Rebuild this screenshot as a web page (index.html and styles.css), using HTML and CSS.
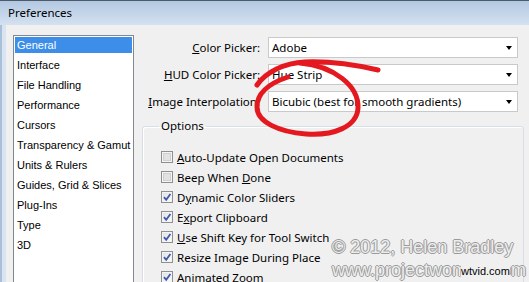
FILE: index.html
```html
<!DOCTYPE html>
<html lang="en">
<head>
  <meta charset="UTF-8">
  <meta name="viewport" content="width=device-width, initial-scale=1.0">
  <title>Preferences</title>

  <link rel="stylesheet" href="styles.css">
</head>

<body>
  <div class="window">
    <div class="titlebar">Preferences</div>

    <div class="content">
      <ul class="nav">
        <li class="active">General</li>
        <li>Interface</li>
        <li>File Handling</li>
        <li>Performance</li>
        <li>Cursors</li>
        <li>Transparency &amp; Gamut</li>
        <li>Units &amp; Rulers</li>
        <li>Guides, Grid &amp; Slices</li>
        <li>Plug-Ins</li>
        <li>Type</li>
        <li>3D</li>
      </ul>

      <div class="panel">
        <div class="field">
          <span class="label"><u>C</u>olor Picker:</span>
          <div class="select">Adobe</div>
        </div>
        <div class="field">
          <span class="label"><u>H</u>UD Color Picker:</span>
          <div class="select">Hue Strip</div>
        </div>
        <div class="field">
          <span class="label"><u>I</u>mage Interpolation:</span>
          <div class="select">Bicubic (best for smooth gradients)</div>
        </div>

        <fieldset class="options">
          <legend>Options</legend>
          <div class="checks">
            <div class="check"><span class="box"></span><span><u>A</u>uto-Update Open Documents</span></div>
            <div class="check"><span class="box"></span><span>Beep When <u>D</u>one</span></div>
            <div class="check"><span class="box on"><svg viewBox="0 0 10 10"><path d="M2 5.2 L4.2 7.8 L8.4 2"/></svg></span><span>D<u>y</u>namic Color Sliders</span></div>
            <div class="check"><span class="box on"><svg viewBox="0 0 10 10"><path d="M2 5.2 L4.2 7.8 L8.4 2"/></svg></span><span>E<u>x</u>port Clipboard</span></div>
            <div class="check"><span class="box on"><svg viewBox="0 0 10 10"><path d="M2 5.2 L4.2 7.8 L8.4 2"/></svg></span><span><u>U</u>se Shift Key for Tool Switch</span></div>
            <div class="check"><span class="box on"><svg viewBox="0 0 10 10"><path d="M2 5.2 L4.2 7.8 L8.4 2"/></svg></span><span>Resize Image During Place</span></div>
            <div class="check"><span class="box on"><svg viewBox="0 0 10 10"><path d="M2 5.2 L4.2 7.8 L8.4 2"/></svg></span><span>Animated Zoom</span></div>
          </div>
        </fieldset>
      </div>
    </div>
  </div>

  <!-- red pen mark drawn over the screenshot -->
  <svg class="markup" viewBox="0 0 529 282" width="529" height="282">
    <path d="M257 85 C266 72 284 63 305 62 C330 61 356 65 378 70"/>
    <path d="M300 63 C334 66 359 86 358 108 C357 127 333 136 306 134 C279 132 257 122 257 107 C257 93 270 83 288 77"/>
  </svg>

  <div class="watermark">
    <div>© 2012, Helen Bradley</div>
    <div>www.projectwoman.com</div>
  </div>
  <span class="stamp">wtvid.com</span>
</body>
</html>
```

FILE: styles.css
```css
/* === Reset === */
* {
  box-sizing: border-box;
  margin: 0;
  padding: 0;
}
html, body {
  width: 529px;
  height: 282px;
  overflow: hidden;
}
body {
  position: relative;
  font-family: "Noto Sans", "Liberation Sans", sans-serif;
  font-size: 11.5px;
  color: #000;
  background: #f0f0f0;
}

/* === Window frame === */
.window {
  height: 282px;
  display: flex;
  flex-direction: column;
  background: linear-gradient(to right, #a9bfd7 2px, #d8e4f1 2px);
}
.titlebar {
  height: 25px;
  border-top: 1px solid #4d5a68;
  background: linear-gradient(#b3c8e2, #d4e1f0);
  padding: 4px 8px;
  font-size: 11.5px;
  line-height: 16px;
}
.content {
  flex: 1;
  display: flex;
  margin-left: 6px;
  padding: 10px 0 0 7px;
  background: #f0f0f0;
}

/* === Category list === */
.nav {
  list-style: none;
  width: 121px;
  border: 1px solid #828790;
  border-bottom: none;
  background: #fff;
  padding: 0 1px;
  font-family: "Liberation Sans", Arial, sans-serif;
  font-size: 11px;
}
.nav li {
  height: 20px;
  line-height: 19px;
  padding-left: 2px;
}
.nav li.active {
  color: #fff;
  background: linear-gradient(#3d8ee8, #3d8ee8) no-repeat 0 1px / 100% 16px;
}

/* === General panel === */
.panel {
  margin-left: 8px;
  padding-top: 2px;
}
.field {
  display: flex;
  align-items: center;
  height: 21px;
  margin-bottom: 6px;
}
.label {
  width: 118px;
  margin-right: 8px;
  text-align: right;
  white-space: nowrap;
}
.select {
  position: relative;
  width: 250px;
  height: 21px;
  border: 1px solid #c9c9c9;
  background: #fff;
  padding-left: 3px;
  display: flex;
  align-items: center;
}
.select::after {
  content: "";
  position: absolute;
  right: 5px;
  top: 8px;
  border-top: 4px solid #000;
  border-left: 3.5px solid transparent;
  border-right: 3.5px solid transparent;
}

/* === Options group === */
.options {
  width: 382px;
  border: 1px solid #d5dfe5;
  border-radius: 3px;
  padding: 0 0 0 16px;
  box-shadow: inset 1px 1px #fff;
}
.options legend {
  padding: 0 2px;
  line-height: 16px;
}
.checks {
  padding-top: 13px;
}
.check {
  display: flex;
  align-items: center;
  gap: 4px;
  height: 20px;
  margin-left: 2px;
  white-space: nowrap;
}
.box {
  width: 12px;
  height: 12px;
  flex: 0 0 12px;
  border: 1px solid #8e8f8f;
  background: #e2e2e2;
  box-shadow: inset 0 0 0 1px #f4f4f4, inset 0 0 0 2px #d0d0d0;
}
.box.on {
  background: linear-gradient(135deg, #e0e0e0, #fdfdfd);
  box-shadow: inset 0 0 0 1px #f4f4f4;
}
.box svg {
  display: block;
  width: 10px;
  height: 10px;
}
.box path {
  fill: none;
  stroke: #3f5aa9;
  stroke-width: 1.8;
}

/* === Overlays === */
.markup {
  position: absolute;
  left: 0;
  top: 0;
  pointer-events: none;
}
.markup path {
  fill: none;
  stroke: #e41920;
  stroke-width: 5;
  stroke-linecap: round;
  stroke-linejoin: round;
}
.watermark {
  position: absolute;
  left: 332px;
  top: 236px;
  font-family: "Liberation Sans", Arial, sans-serif;
  font-size: 18px;
  line-height: 23px;
  color: #ededed;
  white-space: nowrap;
  text-shadow: 1px 0 #9a9a9a, -1px 0 #9a9a9a, 0 1px #9a9a9a, 0 -1px #9a9a9a;
}
.stamp {
  position: absolute;
  left: 461px;
  top: 264px;
  font-family: "Liberation Sans", Arial, sans-serif;
  font-size: 11px;
  line-height: 14px;
  background: #f0f0f0;
  color: #000;
}
```
